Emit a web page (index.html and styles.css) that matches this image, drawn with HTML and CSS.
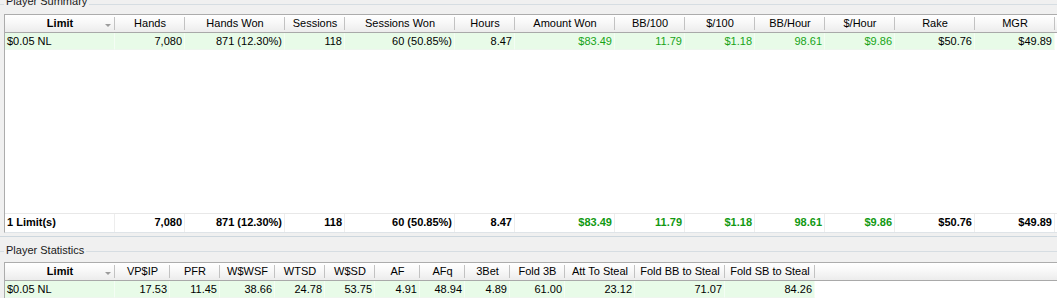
FILE: index.html
```html
<!DOCTYPE html>
<html>
<head>
<meta charset="utf-8">
<link rel="stylesheet" href="styles.css">
</head>
<body>
<div class="page">
  <section class="group g1">
    <div class="gtitle"><span class="gtick"></span><span class="gtext">Player Summary</span><span class="gline"></span></div>
    <div class="grid grid1">
      <div class="row head">
        <div class="c sort"><b>Limit</b><i class="arrow"></i></div>
        <div class="c">Hands</div>
        <div class="c">Hands Won</div>
        <div class="c">Sessions</div>
        <div class="c">Sessions Won</div>
        <div class="c">Hours</div>
        <div class="c">Amount Won</div>
        <div class="c">BB/100</div>
        <div class="c">$/100</div>
        <div class="c">BB/Hour</div>
        <div class="c">$/Hour</div>
        <div class="c">Rake</div>
        <div class="c">MGR</div>
        <div class="c end"></div>
      </div>
      <div class="row data">
        <div class="c l">$0.05 NL</div>
        <div class="c">7,080</div>
        <div class="c">871 (12.30%)</div>
        <div class="c">118</div>
        <div class="c">60 (50.85%)</div>
        <div class="c">8.47</div>
        <div class="c g">$83.49</div>
        <div class="c g">11.79</div>
        <div class="c g">$1.18</div>
        <div class="c g">98.61</div>
        <div class="c g">$9.86</div>
        <div class="c">$50.76</div>
        <div class="c">$49.89</div>
        <div class="c end"></div>
      </div>
      <div class="fill"></div>
      <div class="row total">
        <div class="c l">1 Limit(s)</div>
        <div class="c">7,080</div>
        <div class="c">871 (12.30%)</div>
        <div class="c">118</div>
        <div class="c">60 (50.85%)</div>
        <div class="c">8.47</div>
        <div class="c g">$83.49</div>
        <div class="c g">11.79</div>
        <div class="c g">$1.18</div>
        <div class="c g">98.61</div>
        <div class="c g">$9.86</div>
        <div class="c">$50.76</div>
        <div class="c">$49.89</div>
        <div class="c end"></div>
      </div>
    </div>
  </section>
  <section class="group g2">
    <div class="gtitle"><span class="gtick"></span><span class="gtext">Player Statistics</span><span class="gline"></span></div>
    <div class="grid grid2">
      <div class="row head">
        <div class="c sort"><b>Limit</b><i class="arrow"></i></div>
        <div class="c">VP$IP</div>
        <div class="c">PFR</div>
        <div class="c">W$WSF</div>
        <div class="c">WTSD</div>
        <div class="c">W$SD</div>
        <div class="c">AF</div>
        <div class="c">AFq</div>
        <div class="c">3Bet</div>
        <div class="c">Fold 3B</div>
        <div class="c">Att To Steal</div>
        <div class="c">Fold BB to Steal</div>
        <div class="c">Fold SB to Steal</div>
        <div class="c end"></div>
      </div>
      <div class="row data">
        <div class="c l">$0.05 NL</div>
        <div class="c">17.53</div>
        <div class="c">11.45</div>
        <div class="c">38.66</div>
        <div class="c">24.78</div>
        <div class="c">53.75</div>
        <div class="c">4.91</div>
        <div class="c">48.94</div>
        <div class="c">4.89</div>
        <div class="c">61.00</div>
        <div class="c">23.12</div>
        <div class="c">71.07</div>
        <div class="c">84.26</div>
        <div class="c end"></div>
      </div>
    </div>
  </section>
</div>
</body>
</html>
```
FILE: styles.css
```css
html, body {
  margin: 0;
  padding: 0;
  background: #f0f0f0;
}
.page {
  width: 1057px;
  height: 298px;
  overflow: hidden;
  display: flex;
  flex-direction: column;
  font-family: "Liberation Sans", Arial, sans-serif;
  font-size: 11px;
  color: #000;
}
.group {
  display: flex;
  flex-direction: column;
  flex: none;
}
.g1 {
  padding-bottom: 3px;
  border-bottom: 1px solid #cdd7de;
}
.gtitle {
  display: flex;
  height: 13px;
  line-height: 13px;
  flex: none;
}
.g1 .gtitle { margin-top: -5px; }
.g2 .gtitle { margin-top: 7px; }
.gtext {
  padding: 0 2px;
  color: #1a1a1a;
  white-space: nowrap;
}
.gtick, .gline {
  height: 0;
  margin-top: 9px;
  border-top: 1px solid #d6dde2;
}
.g2 .gtick, .g2 .gline { margin-top: 7px; }
.gtick { width: 4px; }
.gline { flex: 1; }

.grid {
  margin-left: 4px;
  width: 1070px;
  background: #fff;
  border-top: 1px solid #acacac;
  border-left: 1px solid #acacac;
  box-sizing: border-box;
  display: flex;
  flex-direction: column;
  flex: none;
}
.grid1 {
  margin-top: 6px;
  height: 219px;
  border-bottom: 1px solid #dfe4e8;
}
.grid2 {
  margin-top: 5px;
  height: 60px;
}
.row {
  display: grid;
  flex: none;
}
.grid1 .row {
  grid-template-columns: 110px 70px 100px 60px 110px 60px 100px 70px 70px 70px 70px 80px 80px 1fr;
}
.grid2 .row {
  grid-template-columns: 110px 55px 50px 55px 50px 50px 45px 45px 45px 55px 70px 90px 90px 1fr;
}
.c {
  box-sizing: border-box;
  white-space: nowrap;
  overflow: hidden;
  position: relative;
}
.head {
  height: 17px;
  border-bottom: 1px solid #a9a9a9;
  background: linear-gradient(to bottom, #ffffff 0%, #f8f8f8 45%, #ececec 100%);
}
.head .c {
  line-height: 16px;
  text-align: center;
  background: linear-gradient(#c2c2c2, #c2c2c2) right 0 top 2px / 1px 13px no-repeat;
}
.head .c.end { background: none; }
.head b { font-weight: bold; }
.arrow {
  position: absolute;
  right: 4px;
  top: 9px;
  width: 0;
  height: 0;
  border-left: 3px solid transparent;
  border-right: 3px solid transparent;
  border-top: 3px solid #9c9c9c;
}
.data {
  height: 17px;
}
.data .c {
  line-height: 16px;
  text-align: right;
  padding-right: 2px;
  background: #e8fbe8;
  border-right: 1px solid #f4fdf4;
  border-bottom: 1px solid #eef6ee;
}
.data .c.end, .total .c.end {
  background: transparent;
  border: none;
}
.c.l {
  text-align: left;
  padding-left: 2px;
}
.g {
  color: #17a317;
}
.fill {
  flex: 1;
}
.total {
  height: 18px;
  border-top: 1px solid #e8e8e8;
  font-weight: bold;
}
.total .c {
  line-height: 17px;
  text-align: right;
  padding-right: 2px;
  border-right: 1px solid #ededed;
}
.total .c.l {
  text-align: left;
  padding-left: 2px;
}
.total .g {
  color: #129912;
}
```
